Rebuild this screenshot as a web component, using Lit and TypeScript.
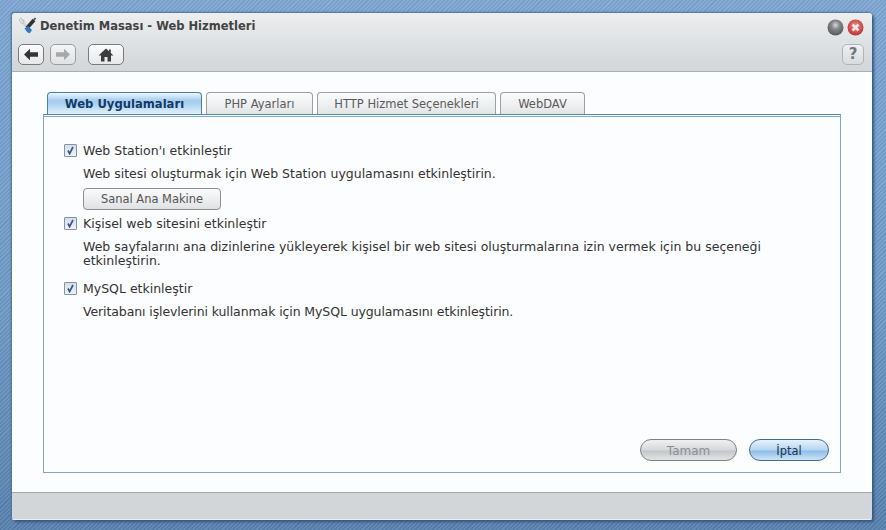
import { LitElement, html, css } from "lit";
import { customElement } from "lit/decorators.js";

const check = html`<span class="cb"><svg width="9" height="9" viewBox="0 0 9 9"><path d="M2 4.5 L3.6 7.6 L7 1" fill="none" stroke="#3a5688" stroke-width="1.7"/></svg></span>`;

@customElement("app-root")
export class AppRoot extends LitElement {
  static styles = css`
    :host {
      display: block;
      width: 886px;
      height: 530px;
      box-sizing: border-box;
      padding: 13px 14px 10px 12px;
      overflow: hidden;
      background:
        repeating-linear-gradient(135deg, rgba(255,255,255,.07) 0 1.5px, rgba(0,0,0,.05) 1.5px 3px),
        linear-gradient(#7ea7d4, #6f9bc9 55%, #5882b0);
      font-family: "DejaVu Sans", Verdana, sans-serif;
      font-size: 12.5px;
      color: #333;
    }
    .window {
      height: 507px;
      display: flex;
      flex-direction: column;
      border-radius: 3px 3px 2px 2px;
      box-shadow: -1px -1px 2px #4d7299, 2px 2px 3px #35557c;
      overflow: hidden;
    }
    .head {
      height: 59px;
      box-sizing: border-box;
      background: linear-gradient(#eceeef, #d2d6d9);
      border-bottom: 1px solid #a9aeb2;
      padding: 3px 8px 0 6px;
      display: flex;
      flex-direction: column;
    }
    .title-row { display: flex; align-items: center; height: 19px; gap: 2px; }
    .title { font-size: 11.5px; font-weight: bold; color: #434343; flex: 1; }
    .dots { display: flex; gap: 3px; margin-top: 3px; }
    .nav { display: flex; margin-top: 9px; height: 21px; }
    .nb {
      box-sizing: border-box;
      height: 21px;
      border: 1px solid #777c80;
      border-radius: 5px;
      background: linear-gradient(#fbfbfb, #e6e8ea);
      display: flex;
      align-items: center;
      justify-content: center;
    }
    .back { width: 26px; margin-right: 6px; }
    .fwd { width: 26px; margin-right: 12px; border-color: #989da1; background: linear-gradient(#f4f5f6, #dfe1e3); }
    .home { width: 36px; }
    .spacer { flex: 1; }
    .help {
      width: 22px;
      border-color: #b0b4b7;
      background: linear-gradient(#eef0f1, #d9dcde);
      color: #73777a;
      font-weight: bold;
      font-size: 15px;
      line-height: 1;
    }
    .main {
      flex: 1;
      background: #fcfdfe;
      padding: 20px 31px 19px 31px;
      display: flex;
      flex-direction: column;
    }
    .tabs { display: flex; height: 22px; padding-left: 4px; gap: 4px; }
    .tab {
      box-sizing: border-box;
      height: 22px;
      border: 1px solid #9aa0a5;
      border-bottom: none;
      border-radius: 4px 4px 0 0;
      background: linear-gradient(#fbfcfc, #e2e5e7);
      color: #5a5a5a;
      font-size: 11.5px;
      display: flex;
      align-items: center;
      justify-content: center;
    }
    .tab.on {
      border-color: #4d7fa6;
      background: linear-gradient(#f0f7fc 0, #a6cdee 35%, #a9d0f0 50%, #e3f1fb 100%);
      color: #123a66;
      font-weight: bold;
      font-size: 11.6px;
    }
    .panel {
      flex: 1;
      box-sizing: border-box;
      border: 1px solid #8ea3b3;
      border-top: 1px solid #4f89ad;
      display: flex;
      flex-direction: column;
      padding-left: 20px;
      padding-right: 11px;
    }
    .rule { height: 1px; margin: 1px -11px 0 -20px; background: #7fa9c6; }
    .form { padding-top: 25px; flex: 1; }
    .row { display: flex; align-items: center; height: 16px; gap: 6px; }
    .cb {
      box-sizing: border-box;
      width: 13px;
      height: 13px;
      border: 1px solid #8492a6;
      border-radius: 1px;
      background: linear-gradient(#d5dfea, #eef2f7);
      display: flex;
      align-items: center;
      justify-content: center;
    }
    .desc { margin: 9px 0 0 19px; line-height: 14px; width: 700px; color: #333; }
    .tight { letter-spacing: -0.1px; }
    .vh {
      box-sizing: border-box;
      width: 138px;
      height: 22px;
      margin: 7px 0 5px 19px;
      border: 1px solid #8b9095;
      border-radius: 4px;
      background: linear-gradient(#fbfbfb, #dfe2e4);
      color: #555;
      font-size: 11.45px;
      display: flex;
      align-items: center;
      justify-content: center;
    }
    .sp1 { margin-top: 12px; }
    .foot { display: flex; justify-content: flex-end; gap: 12px; height: 22px; margin-bottom: 11px; }
    .pill {
      box-sizing: border-box;
      height: 22px;
      border-radius: 11px;
      font-size: 11.5px;
      padding-top: 1px;
      display: flex;
      align-items: center;
      justify-content: center;
    }
    .ok {
      width: 97px;
      border: 1px solid #7d8285;
      background: linear-gradient(#f0f1f2, #d5d8da 50%, #c3c7ca 55%, #e2e4e6);
      color: #8b8f93;
      font-size: 12px;
    }
    .cancel {
      width: 80px;
      border: 1px solid #3f6f95;
      background: linear-gradient(#e8f2fb, #b5d5f1 50%, #8dbde8 55%, #cfe4f7);
      color: #1d3550;
    }
    .bottom {
      height: 28px;
      box-sizing: border-box;
      background: #d2d6d9;
      border-top: 1px solid #a3a8ac;
      border-bottom: 1px solid #eceef0;
    }
  `;

  render() {
    return html`
      <div class="window">
        <div class="head">
          <div class="title-row">
            <svg width="20" height="18" viewBox="0 0 20 18">
              <path d="M3.5 3.5 L13 15" stroke="#d3d6d8" stroke-width="3"/>
              <path d="M1 3 L3 .8 L4 3.5 L6 3 L5.5 6 L3 6 Z" fill="#e6e7e8" stroke="#a8abad" stroke-width=".6"/>
              <path d="M9 11 L16 3" stroke="#2e3236" stroke-width="3.6"/>
              <path d="M16 3 L17.5 1" stroke="#55595d" stroke-width="2"/>
              <path d="M6.5 11.5 L10 9 L14 13 L11.5 16.5 L9 15 Z" fill="#3477c4"/>
            </svg>
            <span class="title">Denetim Masası - Web Hizmetleri</span>
            <div class="dots">
              <svg width="17" height="17" viewBox="0 0 17 17">
                <defs><radialGradient id="g" cx=".5" cy=".35" r=".65"><stop offset="0" stop-color="#d8dadb"/><stop offset=".4" stop-color="#84888b"/><stop offset="1" stop-color="#54585b"/></radialGradient></defs>
                <circle cx="8.5" cy="8.5" r="8" fill="url(#g)"/>
              </svg>
              <svg width="17" height="17" viewBox="0 0 17 17">
                <defs><radialGradient id="r" cx=".5" cy=".4" r=".65"><stop offset="0" stop-color="#ee8a88"/><stop offset="1" stop-color="#b92a2c"/></radialGradient></defs>
                <circle cx="8.5" cy="8.5" r="8" fill="url(#r)"/>
                <path d="M5.5 5.5 L11.5 11.5 M11.5 5.5 L5.5 11.5" stroke="#f6e6e4" stroke-width="2.6"/>
              </svg>
            </div>
          </div>
          <div class="nav">
            <div class="nb back"><svg width="16" height="13" viewBox="0 0 16 13"><path d="M1 6.5 L7 .8 V4.3 H15 V8.7 H7 V12.2 Z" fill="#333639"/></svg></div>
            <div class="nb fwd"><svg width="16" height="13" viewBox="0 0 16 13"><path d="M15 6.5 L9 .8 V4.3 H1 V8.7 H9 V12.2 Z" fill="#a6a9ab"/></svg></div>
            <div class="nb home"><svg width="16" height="14" viewBox="0 0 16 14"><path d="M8 .5 L.5 7.5 H3 V13.5 H6.5 V9 H9.5 V13.5 H13 V7.5 H15.5 L12.8 5 V1.5 H11 V3.3 Z" fill="#3a3d40"/></svg></div>
            <div class="spacer"></div>
            <div class="nb help">?</div>
          </div>
        </div>
        <div class="main">
          <div class="tabs">
            <div class="tab on" style="width:155px">Web Uygulamaları</div>
            <div class="tab" style="width:107px">PHP Ayarları</div>
            <div class="tab" style="width:179px">HTTP Hizmet Seçenekleri</div>
            <div class="tab" style="width:85px">WebDAV</div>
          </div>
          <div class="panel">
            <div class="rule"></div>
            <div class="form">
              <div class="row">${check}<span>Web Station'ı etkinleştir</span></div>
              <div class="desc">Web sitesi oluşturmak için Web Station uygulamasını etkinleştirin.</div>
              <div class="vh">Sanal Ana Makine</div>
              <div class="row">${check}<span>Kişisel web sitesini etkinleştir</span></div>
              <div class="desc">Web sayfalarını ana dizinlerine yükleyerek kişisel bir web sitesi oluşturmalarına izin vermek için bu seçeneği etkinleştirin.</div>
              <div class="row sp1">${check}<span>MySQL etkinleştir</span></div>
              <div class="desc tight">Veritabanı işlevlerini kullanmak için MySQL uygulamasını etkinleştirin.</div>
            </div>
            <div class="foot">
              <div class="pill ok">Tamam</div>
              <div class="pill cancel">İptal</div>
            </div>
          </div>
        </div>
        <div class="bottom"></div>
      </div>
    `;
  }
}
